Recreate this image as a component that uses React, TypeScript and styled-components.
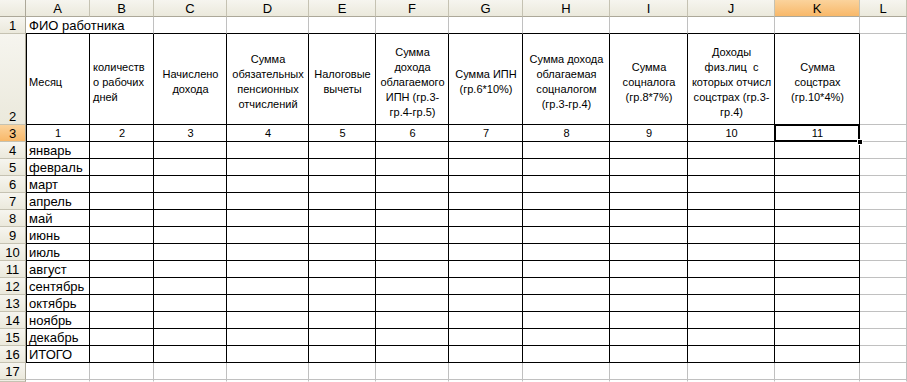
import React from "react";
import styled, { createGlobalStyle, css } from "styled-components";

const GlobalStyle = createGlobalStyle`
  html, body { margin: 0; padding: 0; background: #ffffff; overflow: hidden; }
  body { font-family: "Liberation Sans", Arial, sans-serif; }
  * { box-sizing: border-box; }
`;

const WIDTHS = [64, 64, 73, 82, 67, 73, 74, 87, 78, 87, 85];
const LETTERS = ["A", "B", "C", "D", "E", "F", "G", "H", "I", "J", "K", "L"];
const ACTIVE_COL = 10;
const ACTIVE_ROW = 3;

const Sheet = styled.div`
  display: grid;
  grid-template-columns: 26px ${WIDTHS.map((w) => `${w}px`).join(" ")} 1fr;
  grid-template-rows: 17px 17px 91px 17px repeat(14, 17px) 2px;
  width: 907px;
  height: 382px;
  overflow: hidden;
  font-family: "Liberation Sans", Arial, sans-serif;
  color: #000;
`;

const headerBg = css<{ $active?: boolean }>`
  background: ${(p) =>
    p.$active
      ? "linear-gradient(#fbd39c, #f8b869)"
      : "linear-gradient(#f6f5ef, #ebe9dc)"};
`;

const Corner = styled.div`
  background: linear-gradient(#f6f5ef, #ebe9dc);
  border-right: 1px solid #aca899;
  border-bottom: 1px solid #aca899;
`;

const ColHeader = styled.div<{ $active?: boolean }>`
  ${headerBg};
  border-right: 1px solid #c5c2b2;
  border-bottom: 1px solid #aca899;
  display: flex;
  align-items: center;
  justify-content: center;
  font-size: 13px;
  line-height: 15px;
`;

const RowHeader = styled.div<{ $active?: boolean }>`
  ${headerBg};
  border-right: 1px solid #aca899;
  border-bottom: 1px solid #c5c2b2;
  display: flex;
  align-items: flex-end;
  justify-content: center;
  font-size: 13px;
  line-height: 15px;
  overflow: hidden;
`;

type Line = "black" | "gray" | "none";
const lineColor = (l: Line) =>
  l === "black" ? "#000000" : l === "gray" ? "#c0c0c0" : "transparent";

const Cell = styled.div<{
  $right: Line;
  $bottom: Line;
  $edge?: boolean;
  $span?: number;
  $align?: "left" | "center";
  $valign?: "center" | "end";
  $small?: boolean;
}>`
  position: relative;
  grid-column: span ${(p) => p.$span ?? 1};
  border-right: 1px solid ${(p) => lineColor(p.$right)};
  border-bottom: 1px solid ${(p) => lineColor(p.$bottom)};
  box-shadow: ${(p) => (p.$edge ? "inset 1px 0 0 #000" : "none")};
  display: flex;
  flex-direction: column;
  justify-content: ${(p) => (p.$valign === "center" ? "center" : "flex-end")};
  align-items: ${(p) => (p.$align === "center" ? "center" : "flex-start")};
  text-align: ${(p) => p.$align ?? "left"};
  padding: ${(p) => (p.$valign === "center" ? "6px 2px 0 3px" : "0 2px 0 3px")};
  font-size: ${(p) => (p.$small ? "11px" : "13px")};
  line-height: 15px;
  white-space: nowrap;
  overflow: hidden;
`;

const Caption = styled.span`
  display: block;
  font-size: 11px;
  line-height: 15px;
  white-space: pre;
`;

const Selected = styled(Cell)`
  overflow: visible;
  z-index: 3;
  &::before {
    content: "";
    position: absolute;
    top: -1px;
    left: -1px;
    right: -1px;
    bottom: -1px;
    border: 2px solid #000;
    pointer-events: none;
  }
`;

const FillHandle = styled.div`
  position: absolute;
  right: -4px;
  bottom: -4px;
  width: 6px;
  height: 6px;
  background: #000;
  border: 1px solid #fff;
  z-index: 4;
`;

const HEADINGS: string[][] = [
  ["Месяц"],
  ["количеств", "о рабочих", "дней"],
  ["Начислено", "дохода"],
  ["Сумма", "обязательных", "пенсионных", "отчислений"],
  ["Налоговые", "вычеты"],
  ["Сумма", "дохода", "облагаемого", "ИПН (гр.3-", "гр.4-гр.5)"],
  ["Сумма ИПН", "(гр.6*10%)"],
  ["Сумма дохода", "облагаемая", "соцналогом", "(гр.3-гр.4)"],
  ["Сумма", "соцналога", "(гр.8*7%)"],
  ["Доходы", "физ.лиц  с", "которых отчисл", "соцстрах (гр.3-", "гр.4)"],
  ["Сумма", "соцстрах", "(гр.10*4%)"],
];

const MONTHS = [
  "январь",
  "февраль",
  "март",
  "апрель",
  "май",
  "июнь",
  "июль",
  "август",
  "сентябрь",
  "октябрь",
  "ноябрь",
  "декабрь",
  "ИТОГО",
];

export default function App() {
  const rows: React.ReactNode[] = [];

  // column header row
  rows.push(<Corner key="corner" />);
  LETTERS.forEach((l, i) => {
    rows.push(
      <ColHeader key={`h-${l}`} $active={i === ACTIVE_COL}>
        {l}
      </ColHeader>
    );
  });

  // row 1
  rows.push(<RowHeader key="r1">1</RowHeader>);
  rows.push(
    <Cell key="A1" $span={2} $right="gray" $bottom="black">
      ФИО работника
    </Cell>
  );
  for (let c = 2; c < 11; c++) {
    rows.push(<Cell key={`1-${c}`} $right="gray" $bottom="black" />);
  }
  rows.push(<Cell key="1-L" $right="gray" $bottom="gray" />);

  // row 2: headings
  rows.push(<RowHeader key="r2">2</RowHeader>);
  HEADINGS.forEach((lines, c) => {
    rows.push(
      <Cell
        key={`2-${c}`}
        $right="black"
        $bottom="black"
        $edge={c === 0}
        $valign="center"
        $align={c < 2 ? "left" : "center"}
        $small
      >
        {lines.map((t, j) => (
          <Caption key={j}>{t}</Caption>
        ))}
      </Cell>
    );
  });
  rows.push(<Cell key="2-L" $right="gray" $bottom="gray" />);

  // row 3: column numbers
  rows.push(
    <RowHeader key="r3" $active>
      3
    </RowHeader>
  );
  for (let c = 0; c < 11; c++) {
    const Comp = c === ACTIVE_COL ? Selected : Cell;
    rows.push(
      <Comp
        key={`3-${c}`}
        $right="black"
        $bottom="black"
        $edge={c === 0}
        $align="center"
        $small
      >
        {c + 1}
        {c === ACTIVE_COL && <FillHandle />}
      </Comp>
    );
  }
  rows.push(<Cell key="3-L" $right="gray" $bottom="gray" />);

  // rows 4-16
  MONTHS.forEach((m, i) => {
    const r = i + 4;
    rows.push(
      <RowHeader key={`r${r}`} $active={r === ACTIVE_ROW}>
        {r}
      </RowHeader>
    );
    for (let c = 0; c < 11; c++) {
      rows.push(
        <Cell key={`${r}-${c}`} $right="black" $bottom="black" $edge={c === 0}>
          {c === 0 ? m : null}
        </Cell>
      );
    }
    rows.push(<Cell key={`${r}-L`} $right="gray" $bottom="gray" />);
  });

  // row 17 (empty)
  rows.push(<RowHeader key="r17">17</RowHeader>);
  for (let c = 0; c < 12; c++) {
    rows.push(<Cell key={`17-${c}`} $right="gray" $bottom="gray" />);
  }

  // top sliver of row 18
  rows.push(<RowHeader key="r18" />);
  for (let c = 0; c < 12; c++) {
    rows.push(<Cell key={`18-${c}`} $right="gray" $bottom="none" />);
  }

  return (
    <>
      <GlobalStyle />
      <Sheet>{rows}</Sheet>
    </>
  );
}
